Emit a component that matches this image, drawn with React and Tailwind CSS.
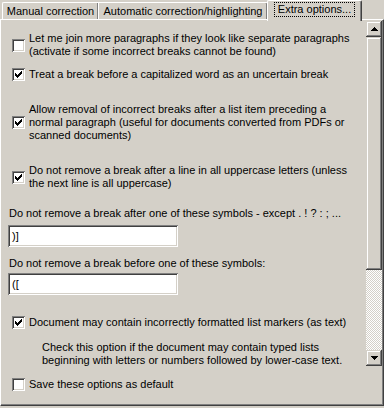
import React from "react";

// Win2k-style 3D edges
const SUNKEN =
  "shadow-[inset_1px_1px_#808080,inset_-1px_-1px_#ffffff,inset_2px_2px_#404040,inset_-2px_-2px_#d4d0c8]";
const RAISED =
  "shadow-[inset_-1px_-1px_#404040,inset_1px_1px_#d4d0c8,inset_-2px_-2px_#808080,inset_2px_2px_#ffffff]";

function CheckMark() {
  return (
    <svg width="7" height="7" viewBox="0 0 7 7" shapeRendering="crispEdges">
      <path
        fill="#000"
        d="M0 2h1v3H0z M1 3h1v3H1z M2 4h1v3H2z M3 3h1v3H3z M4 2h1v3H4z M5 1h1v3H5z M6 0h1v3H6z"
      />
    </svg>
  );
}

function Checkbox({ checked }) {
  return (
    <span className={`flex h-[13px] w-[13px] shrink-0 items-center justify-center bg-white ${SUNKEN}`}>
      {checked && <CheckMark />}
    </span>
  );
}

function Option({ checked, lines, className = "" }) {
  return (
    <div className={`flex items-center gap-[4px] pl-[11px] ${className}`}>
      <Checkbox checked={checked} />
      <div className="whitespace-nowrap leading-[13px]">
        {lines.map((l, i) => (
          <div key={i}>{l}</div>
        ))}
      </div>
    </div>
  );
}

function TextBox({ value, className = "" }) {
  return (
    <div className={`ml-[7px] flex h-[22px] w-[170px] items-center bg-white px-[4px] ${SUNKEN} ${className}`}>
      {value}
    </div>
  );
}

function Arrow({ up }) {
  return (
    <svg width="7" height="4" viewBox="0 0 7 4" shapeRendering="crispEdges">
      <path fill="#000" d={up ? "M3 0h1v1h1v1h1v1h1v1H0V3h1V2h1V1h1z" : "M0 0h7v1H6v1H5v1H4v1H3V3H2V2H1V1H0z"} />
    </svg>
  );
}

function ScrollBar() {
  return (
    <div className="flex w-[16px] shrink-0 flex-col">
      <div className={`flex h-[16px] items-center justify-center bg-[#d4d0c8] ${RAISED}`}>
        <Arrow up />
      </div>
      <div className={`h-[233px] bg-[#d4d0c8] ${RAISED}`} />
      <div className="flex-1 bg-[conic-gradient(#ffffff_25%,#d4d0c8_0_50%,#ffffff_0_75%,#d4d0c8_0)] bg-[length:2px_2px]" />
      <div className={`flex h-[16px] items-center justify-center bg-[#d4d0c8] ${RAISED}`}>
        <Arrow />
      </div>
    </div>
  );
}

export default function App() {
  return (
    <div
      className="h-[408px] w-[384px] overflow-hidden bg-[#d4d0c8] text-[11px] text-black"
      style={{ fontFamily: '"Liberation Sans", Arial, sans-serif' }}
    >
      {/* tabs */}
      <div className="flex h-[19px] items-end pl-[2px]">
        <div className="flex h-[17px] w-[96px] items-center justify-center rounded-tl-[2px] border-l border-t border-white shadow-[inset_-1px_0_#808080]">
          Manual correction
        </div>
        <div className="flex h-[17px] w-[170px] items-center justify-center rounded-tr-[2px] border-l border-r border-t border-white border-r-[#404040] shadow-[inset_-1px_0_#808080]">
          Automatic correction/highlighting
        </div>
        <div className="relative z-10 -mb-[2px] -ml-[1px] flex h-[21px] w-[95px] items-start justify-center rounded-t-[2px] border-l border-r border-t border-white border-r-[#404040] bg-[#d4d0c8] pt-[1px] shadow-[inset_-1px_0_#808080]">
          <span className="border border-dotted border-black px-[3px] leading-[13px]">Extra options...</span>
        </div>
      </div>

      {/* panel */}
      <div className="flex h-[387px] flex-col border-l border-t border-white border-r border-b border-r-[#404040] border-b-[#404040] pt-[1px] shadow-[inset_-1px_-1px_#808080]">
        <div className="flex h-[345px] pr-[1px]">
          <div className="flex-1 overflow-hidden">
            <Option
              className="mt-[11px]"
              lines={[
                "Let me join more paragraphs if they look like separate paragraphs",
                "(activate if some incorrect breaks cannot be found)",
              ]}
            />
            <Option
              checked
              className="mt-[10px]"
              lines={["Treat a break before a capitalized word as an uncertain break"]}
            />
            <Option
              checked
              className="mt-[22px]"
              lines={[
                "Allow removal of incorrect breaks after a list item preceding a",
                "normal paragraph (useful for documents converted from PDFs or",
                "scanned documents)",
              ]}
            />
            <Option
              checked
              className="mt-[22px]"
              lines={[
                "Do not remove a break after a line in all uppercase letters (unless",
                "the next line is all uppercase)",
              ]}
            />
            <div className="mt-[17px] whitespace-nowrap pl-[8px] leading-[13px]">
              Do not remove a break after one of these symbols - except . ! ? : ; ...
            </div>
            <TextBox value=")]" className="mt-[5px]" />
            <div className="mt-[10px] whitespace-nowrap pl-[8px] leading-[13px]">
              Do not remove a break before one of these symbols:
            </div>
            <TextBox value="([" className="mt-[3px]" />
            <Option
              checked
              className="mt-[21px]"
              lines={["Document may contain incorrectly formatted list markers (as text)"]}
            />
            <div className="mt-[12px] whitespace-nowrap pl-[41px] leading-[13px]">
              <div>Check this option if the document may contain typed lists</div>
              <div>beginning with letters or numbers followed by lower-case text.</div>
            </div>
          </div>
          <ScrollBar />
        </div>
        <Option className="mt-[12px]" lines={["Save these options as default"]} />
      </div>
    </div>
  );
}
